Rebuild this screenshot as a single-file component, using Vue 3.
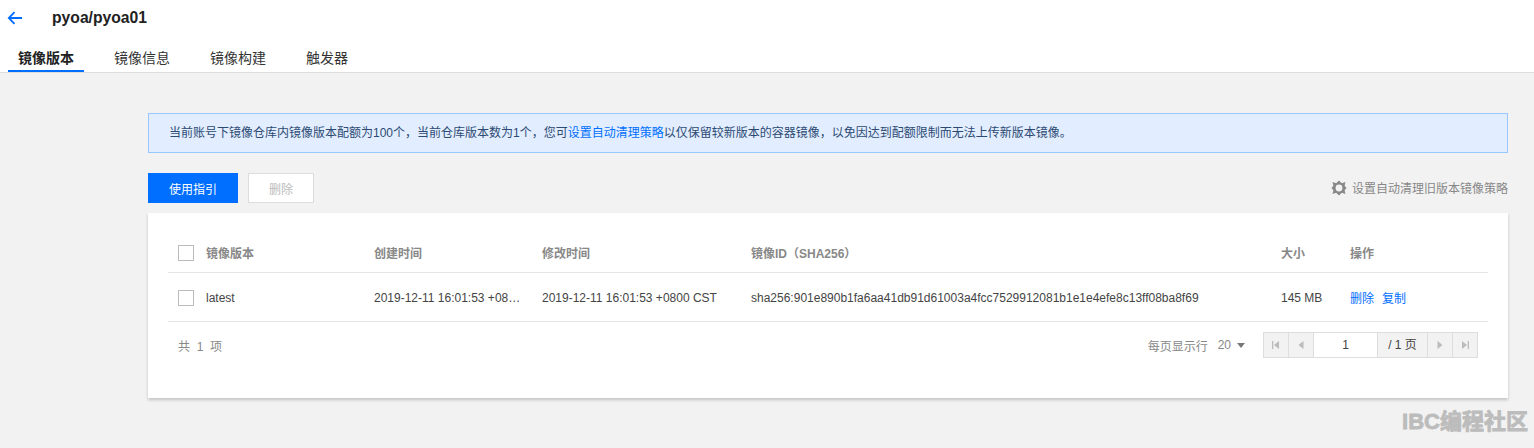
<script setup>
const tabs = ['镜像版本', '镜像信息', '镜像构建', '触发器']
const columns = [
  { key: 'ver', label: '镜像版本' },
  { key: 'created', label: '创建时间' },
  { key: 'updated', label: '修改时间' },
  { key: 'id', label: '镜像ID（SHA256）' },
  { key: 'size', label: '大小' },
  { key: 'ops', label: '操作' }
]
</script>

<template>
  <div class="page">
    <header class="head">
      <div class="title-row">
        <svg class="back" width="16" height="14" viewBox="0 0 16 14" fill="none">
          <path d="M15 7H2M7.500 1.200 1.800 7l5.700 5.800" stroke="#006eff" stroke-width="1.800" />
        </svg>
        <h1 class="title">pyoa/pyoa01</h1>
      </div>
      <nav class="tabs">
        <a v-for="(t, i) in tabs" :key="t" class="tab" :class="{ active: i === 0 }">{{ t }}</a>
      </nav>
    </header>

    <main class="content">
      <div class="alert">
        当前账号下镜像仓库内镜像版本配额为100个，当前仓库版本数为1个，您可<a class="link">设置自动清理策略</a>以仅保留较新版本的容器镜像，以免因达到配额限制而无法上传新版本镜像。
      </div>

      <div class="toolbar">
        <button class="btn primary">使用指引</button>
        <button class="btn disabled">删除</button>
        <span class="policy">
          <svg class="gear" width="16" height="16" viewBox="0 0 16 16">
            <path fill="#888" fill-rule="evenodd" d="M8 .5l2.800 2.650 3.700-1.100-.9 3.750L15.500 8l-1.900 2.200.9 3.750-3.700-1.100L8 15.500l-2.800-2.650-3.700 1.100.9-3.750L.5 8l1.900-2.200-.9-3.750 3.700 1.100L8 .5zM8 4.600a3.400 3.400 0 1 0 0 6.800 3.400 3.400 0 0 0 0-6.800z" />
          </svg>
          设置自动清理旧版本镜像策略
        </span>
      </div>

      <section class="card">
        <div class="row thead">
          <span class="cell check"><i class="box"></i></span>
          <span v-for="c in columns" :key="c.key" class="cell" :class="c.key">{{ c.label }}</span>
        </div>
        <div class="row tbody">
          <span class="cell check"><i class="box"></i></span>
          <span class="cell ver">latest</span>
          <span class="cell created ellipsis">2019-12-11 16:01:53 +0800 CST</span>
          <span class="cell updated">2019-12-11 16:01:53 +0800 CST</span>
          <span class="cell id">sha256:901e890b1fa6aa41db91d61003a4fcc7529912081b1e1e4efe8c13ff08ba8f69</span>
          <span class="cell size">145 MB</span>
          <span class="cell ops"><a class="link">删除</a><a class="link">复制</a></span>
        </div>
        <div class="pager">
          <span class="total">共&nbsp; 1&nbsp; 项</span>
          <span class="per-page">每页显示行</span>
          <span class="per-count">20<i class="caret"></i></span>
          <div class="pages">
            <span class="pg">
              <svg width="8" height="8" viewBox="0 0 8 8"><path fill="#bbb" d="M0 0h1.300v8H0zM7 0v8L2 4z" /></svg>
            </span>
            <span class="pg">
              <svg width="6" height="8" viewBox="0 0 6 8"><path fill="#bbb" d="M5.500 0v8L.5 4z" /></svg>
            </span>
            <span class="pg-input">1</span>
            <span class="pg-label">/ 1 页</span>
            <span class="pg">
              <svg width="6" height="8" viewBox="0 0 6 8"><path fill="#bbb" d="M.5 0v8l5-4z" /></svg>
            </span>
            <span class="pg last">
              <svg width="8" height="8" viewBox="0 0 8 8"><path fill="#bbb" d="M8 0H6.700v8H8zM1 0v8l5-4z" /></svg>
            </span>
          </div>
        </div>
      </section>
    </main>

    <div class="watermark">IBC编程社区</div>
  </div>
</template>

<style scoped>
.page {
  position: relative;
  height: 448px;
  overflow: hidden;
  background: #f2f2f2;
  font-family: "Liberation Sans", "Noto Sans CJK SC", sans-serif;
  font-size: 12px;
  color: #444;
}
.head {
  height: 72px;
  background: #fff;
  border-bottom: 1px solid #ddd;
  box-sizing: content-box;
}
.title-row {
  display: flex;
  align-items: center;
  height: 36px;
  padding-left: 7px;
}
.back { display: block; }
.title {
  margin: 0 0 0 29px;
  font-size: 15.700px;
  font-weight: 700;
  color: #222;
  line-height: 36px;
}
.tabs {
  display: flex;
  height: 36px;
  padding-left: 8px;
}
.tab {
  box-sizing: border-box;
  height: 36px;
  margin-right: 20px;
  padding: 0 10px;
  font-size: 14px;
  line-height: 44px;
  color: #333;
  overflow: hidden;
  white-space: nowrap;
}
.tab.active {
  font-weight: 700;
  color: #222;
  border-bottom: 2px solid #006eff;
}
.content {
  padding: 40px 26px 0 148px;
}
.alert {
  box-sizing: border-box;
  height: 40px;
  padding-left: 20px;
  line-height: 38px;
  background: #e2eeff;
  border: 1px solid #97c7ff;
  color: #2c4a73;
  white-space: nowrap;
}
.link {
  color: #006eff;
}
.toolbar {
  display: flex;
  align-items: center;
  gap: 10px;
  margin-top: 20px;
}
.btn {
  box-sizing: border-box;
  height: 30px;
  padding: 0;
  font: inherit;
  border: 1px solid transparent;
}
.primary {
  width: 90px;
  background: #006eff;
  color: #fff;
}
.disabled {
  width: 66px;
  background: #fff;
  border-color: #ddd;
  color: #bbb;
}
.policy {
  display: flex;
  align-items: center;
  gap: 5px;
  margin-left: auto;
  margin-bottom: 2px;
  color: #888;
}
.gear {
  display: block;
  transform: translateY(1px);
}
.card {
  box-sizing: border-box;
  height: 185px;
  margin-top: 10px;
  padding: 20px 20px 0;
  background: #fff;
  box-shadow: 0 2px 3px rgba(0, 0, 0, 0.2);
}
.row {
  display: flex;
  align-items: center;
  box-sizing: border-box;
  border-bottom: 1px solid #e5e5e5;
}
.thead {
  height: 40px;
  font-weight: 700;
  color: #888;
}
.tbody {
  height: 49px;
  padding-top: 1px;
  color: #444;
}
.cell {
  box-sizing: border-box;
  padding: 0 10px;
  white-space: nowrap;
}
.check {
  width: 28px;
  padding: 0 0 0 10px;
  display: flex;
}
.box {
  display: block;
  box-sizing: border-box;
  width: 16px;
  height: 16px;
  flex: none;
  background: #fff;
  border: 1px solid #bbb;
}
.ver { width: 168px; }
.created { width: 168px; }
.updated { width: 209px; }
.id { width: 530px; }
.size { width: 69px; }
.ops { flex: 1; }
.ellipsis {
  overflow: hidden;
  text-overflow: ellipsis;
}
.ops .link { margin-right: 8px; }
.pager {
  display: flex;
  align-items: center;
  height: 46px;
  padding: 0 10px;
  color: #888;
}
.total { margin-right: auto; }
.per-count {
  display: flex;
  align-items: center;
  margin-left: 10px;
}
.caret {
  display: block;
  width: 0;
  height: 0;
  margin-left: 6px;
  border-left: 4px solid transparent;
  border-right: 4px solid transparent;
  border-top: 5px solid #777;
}
.pages {
  display: flex;
  height: 26px;
  margin-left: 18px;
  box-sizing: border-box;
  border: 1px solid #ddd;
  background: #f2f2f2;
}
.pg {
  box-sizing: border-box;
  display: flex;
  align-items: center;
  justify-content: center;
  width: 25px;
  border-right: 1px solid #ddd;
}
.pg.last {
  width: 24px;
  border-right: 0;
}
.pg-input {
  box-sizing: border-box;
  width: 64px;
  line-height: 24px;
  text-align: center;
  background: #fff;
  color: #444;
  border-right: 1px solid #ddd;
}
.pg-label {
  box-sizing: border-box;
  width: 50px;
  line-height: 24px;
  text-align: center;
  color: #444;
  border-right: 1px solid #ddd;
}
.watermark {
  position: absolute;
  right: 6px;
  top: 408px;
  font-size: 22px;
  line-height: 28px;
  font-weight: 700;
  color: #bcbcbc;
  -webkit-text-stroke: 0.8px #bcbcbc;
}
</style>
